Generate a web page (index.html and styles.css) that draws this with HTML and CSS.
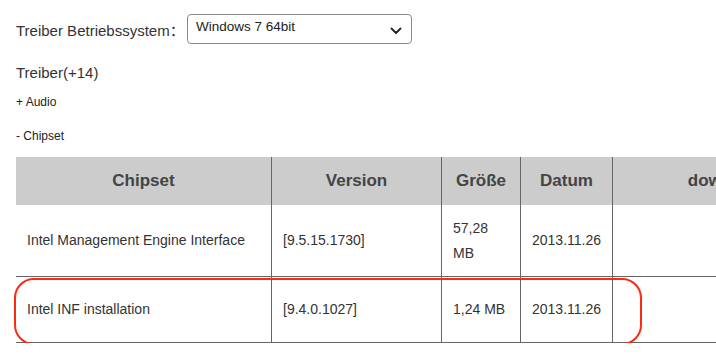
FILE: index.html
```html
<!DOCTYPE html>
<html lang="de">
<head>
<meta charset="utf-8">
<title>Treiber</title>
<link rel="stylesheet" href="styles.css">
</head>
<body>
<div class="page">
  <div class="os-row">
    <span class="os-label">Treiber Betriebssystem：</span>
    <div class="select">
      <span class="select-value">Windows 7 64bit</span>
      <svg class="chevron" width="12" height="8" viewBox="0 0 12 8"><path d="M1.5 1.5 L6 6 L10.5 1.5" fill="none" stroke="#222" stroke-width="1.8" stroke-linecap="round" stroke-linejoin="round"/></svg>
    </div>
  </div>
  <div class="drivers-title">Treiber(+14)</div>
  <div class="group">+ Audio</div>
  <div class="group group-open">- Chipset</div>
  <div class="table-wrap">
    <table class="drivers">
      <thead>
        <tr>
          <th class="c-name">Chipset</th>
          <th class="c-ver">Version</th>
          <th class="c-size">Größe</th>
          <th class="c-date">Datum</th>
          <th class="c-dl">download</th>
        </tr>
      </thead>
      <tbody>
        <tr class="row-tall">
          <td>Intel Management Engine Interface</td>
          <td>[9.5.15.1730]</td>
          <td>57,28 MB</td>
          <td>2013.11.26</td>
          <td></td>
        </tr>
        <tr class="row-short">
          <td>Intel INF installation</td>
          <td>[9.4.0.1027]</td>
          <td>1,24 MB</td>
          <td>2013.11.26</td>
          <td></td>
        </tr>
      </tbody>
    </table>
    <div class="highlight"></div>
  </div>
</div>
</body>
</html>
```
FILE: styles.css
```css
html, body {
  margin: 0;
  padding: 0;
  background: #fff;
  overflow: hidden;
}

body {
  font-family: "Liberation Sans", Arial, "Noto Sans CJK SC", sans-serif;
  color: #333;
}

.page {
  padding: 14px 0 0 16px;
  width: 1000px;
}

.os-row {
  display: flex;
  align-items: center;
  height: 30px;
}

.os-label {
  font-size: 15px;
  color: #333;
  width: 171px;
  white-space: nowrap;
}

.select {
  box-sizing: border-box;
  width: 225px;
  height: 30px;
  border: 1px solid #8a8a8a;
  border-radius: 4px;
  display: flex;
  align-items: flex-start;
  justify-content: space-between;
  padding: 4px 9px 0 8px;
}

.select-value {
  font-size: 13.5px;
  color: #222;
  line-height: 16px;
}

.chevron {
  margin-top: 8px;
}

.drivers-title {
  font-size: 15px;
  margin-top: 20px;
  line-height: 17px;
}

.group {
  font-size: 12px;
  line-height: 14px;
  margin-top: 14px;
  color: #222;
}

.group-open {
  margin-top: 20px;
}

.table-wrap {
  position: relative;
  margin-top: 14px;
}

.drivers {
  border-collapse: collapse;
  table-layout: fixed;
  width: 826px;
}

.drivers th {
  background: #cccccc;
  color: #444;
  font-size: 17px;
  font-weight: bold;
  height: 48px;
  padding: 0;
  text-align: center;
  border-left: 1px solid #666;
}

.drivers th.c-name { width: 255px; border-left: none; }
.drivers th.c-ver { width: 169px; }
.drivers th.c-size { width: 78px; }
.drivers th.c-date { width: 91px; }
.drivers th.c-dl { width: auto; }

.drivers td {
  font-size: 14px;
  line-height: 25px;
  color: #333;
  padding: 0 12px 0 11px;
  border-left: 1px solid #666;
  vertical-align: middle;
}

.drivers td:first-child {
  border-left: none;
}

.drivers tbody tr {
  border-bottom: 1px solid #666;
}

.row-tall td { height: 71px; }
.row-short td { height: 65px; }

.highlight {
  position: absolute;
  left: -2px;
  top: 121px;
  width: 628px;
  height: 67px;
  border: 2px solid #fa2b12;
  border-radius: 20px;
  box-sizing: border-box;
  pointer-events: none;
}
```
